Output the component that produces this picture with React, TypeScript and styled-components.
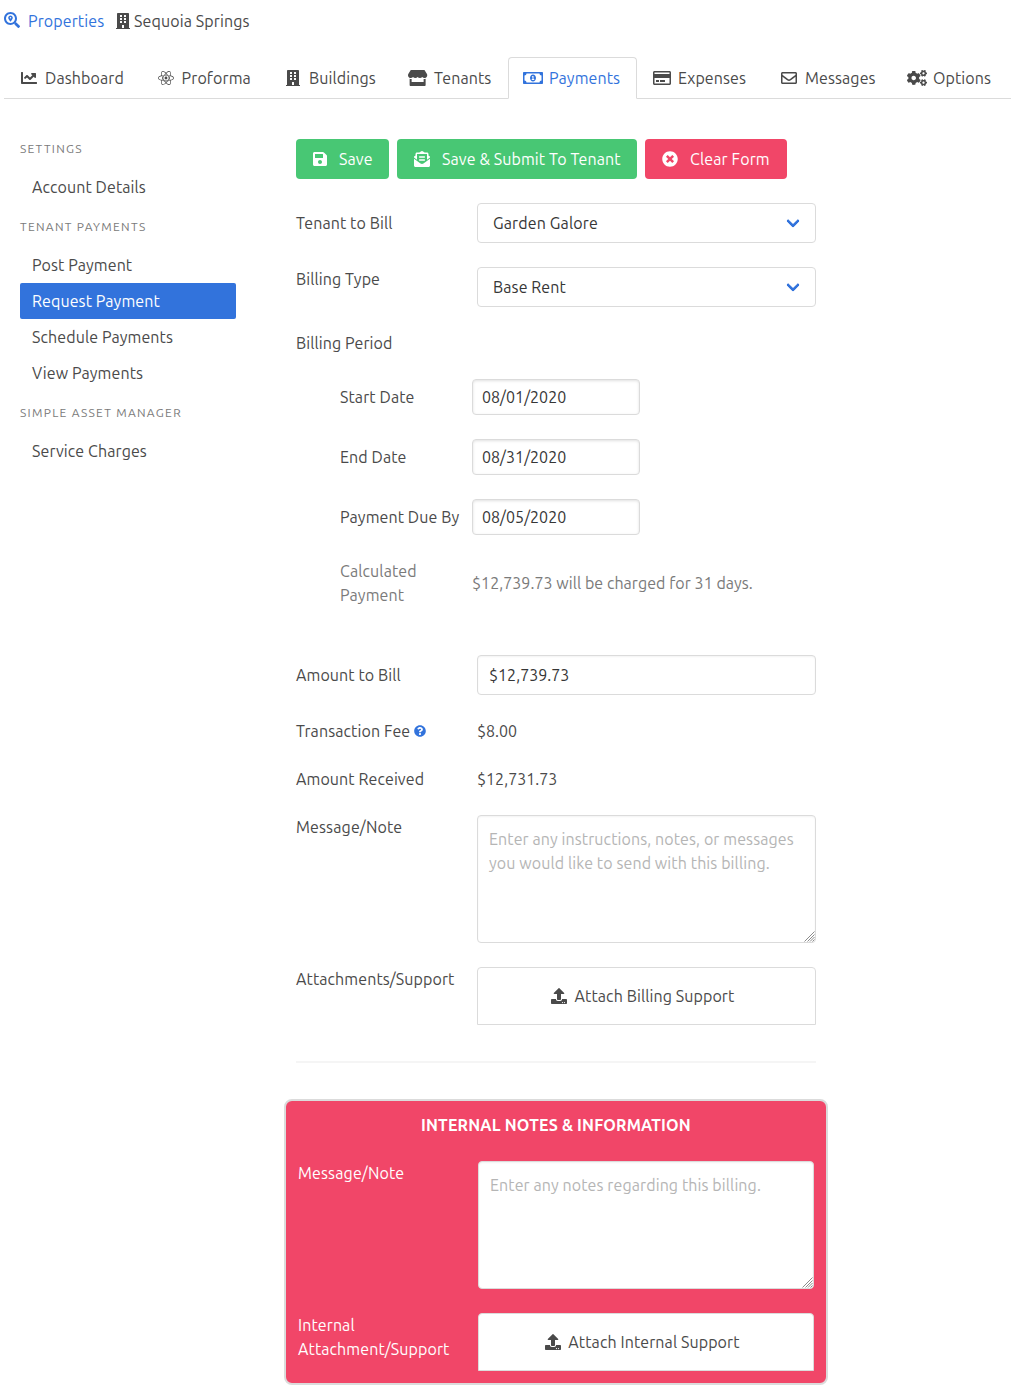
import React from "react";
import styled, { createGlobalStyle } from "styled-components";
import {
  FaSearchLocation, FaBuilding, FaChartLine, FaReact, FaStore, FaRegMoneyBillAlt,
  FaRegCreditCard, FaRegEnvelope, FaCogs, FaSave, FaEnvelopeOpenText, FaTimesCircle,
  FaQuestionCircle, FaUpload,
} from "react-icons/fa";

const GlobalStyle = createGlobalStyle`
  *, *::before, *::after { box-sizing: border-box; }
  body {
    margin: 0;
    background: #fff;
    color: #4a4a4a;
    font-family: Ubuntu, "Noto Sans", sans-serif;
    font-size: 16px;
    line-height: 24px;
    letter-spacing: 0.1px;
  }
  input, textarea, button { font: inherit; letter-spacing: inherit; margin: 0; }
  svg { display: block; flex: none; }
`;

const Text = styled.span<{ $ls?: number }>`
  white-space: nowrap;
  letter-spacing: ${(p) => (p.$ls === undefined ? "inherit" : `${p.$ls}px`)};
`;

const Icon = styled.span<{ $w?: number; $h?: number; $box?: number }>`
  display: flex;
  flex: none;
  justify-content: center;
  align-items: center;
  width: ${(p) => p.$box ?? p.$w ?? 16}px;
  svg {
    width: ${(p) => p.$w ?? 16}px;
    height: ${(p) => p.$h ?? 16}px;
  }
`;

const Page = styled.div`
  height: 1397px;
  overflow: hidden;
  padding: 9px 0 0 4px;
`;

const Breadcrumb = styled.nav`
  display: flex;
  height: 24px;
`;

const Crumb = styled.a<{ $link?: boolean; $gap: number; $w: number }>`
  display: flex;
  gap: ${(p) => p.$gap}px;
  width: ${(p) => p.$w}px;
  color: ${(p) => (p.$link ? "#3273dc" : "#4a4a4a")};
  ${Icon} { height: ${(p) => (p.$link ? 22 : 24)}px; }
`;

const TabBar = styled.nav`
  display: flex;
  height: 42px;
  margin-top: 24px;
  border-bottom: 1px solid #dbdbdb;
`;

const Tab = styled.a<{ $active?: boolean; $w: number }>`
  display: flex;
  align-items: center;
  flex: none;
  gap: 8px;
  width: ${(p) => p.$w}px;
  height: 42px;
  padding: 0 16px;
  border: 1px solid ${(p) => (p.$active ? "#dbdbdb" : "transparent")};
  border-bottom-color: ${(p) => (p.$active ? "#fff" : "#dbdbdb")};
  border-radius: 4px 4px 0 0;
  color: ${(p) => (p.$active ? "#3273dc" : "#4a4a4a")};
`;

const Columns = styled.div`
  display: flex;
  gap: 48px;
  padding: 40px 0 0 16px;
`;

const Sidebar = styled.aside`
  width: 216px;
  flex: none;
`;

const MenuLabel = styled.p`
  margin: 12px 0;
  padding-top: 2px;
  color: #7a7a7a;
  font-size: 12px;
  line-height: 16px;
  letter-spacing: 1.3px;
  text-transform: uppercase;
  &:first-child { margin-top: 0; }
`;

const MenuItem = styled.a<{ $active?: boolean }>`
  display: block;
  padding: 6px 12px;
  border-radius: 2px;
  background: ${(p) => (p.$active ? "#3273dc" : "transparent")};
  color: ${(p) => (p.$active ? "#fff" : "#4a4a4a")};
`;

const Form = styled.main`
  width: 544px;
  padding: 0 12px;
`;

const Buttons = styled.div`
  display: flex;
  gap: 8px;
  margin-bottom: 24px;
`;

const Button = styled.button<{ $color: string; $w: number }>`
  display: flex;
  align-items: center;
  gap: 12px;
  width: ${(p) => p.$w}px;
  height: 40px;
  padding: 0 0 0 17px;
  border: 0;
  border-radius: 4px;
  background: ${(p) => p.$color};
  color: #fff;
`;

const Row = styled.div<{ $center?: boolean; $gap?: number }>`
  display: grid;
  grid-template-columns: 181px 1fr;
  align-items: ${(p) => (p.$center ? "center" : "start")};
  margin-bottom: ${(p) => p.$gap ?? 24}px;
`;

const Label = styled.label`
  display: flex;
  align-items: center;
  gap: 4px;
  svg { color: #3273dc; }
`;

const Select = styled.div`
  display: flex;
  align-items: center;
  justify-content: space-between;
  height: 40px;
  padding: 0 17px 0 15px;
  border: 1px solid #dbdbdb;
  border-radius: 4px;
  color: #363636;
  &::after {
    content: "";
    width: 10px;
    height: 10px;
    margin-bottom: 4px;
    border: 3px solid #3273dc;
    border-top: 0;
    border-right: 0;
    border-radius: 2px;
    transform: rotate(-45deg);
  }
`;

const Period = styled.div`
  padding-left: 44px;
  margin-bottom: 48px;
`;

const PeriodRow = styled.div<{ $muted?: boolean }>`
  display: grid;
  grid-template-columns: 132px 1fr;
  align-items: center;
  margin-bottom: 24px;
  color: ${(p) => (p.$muted ? "#7a7a7a" : "#4a4a4a")};
`;

const Input = styled.input<{ $date?: boolean }>`
  display: block;
  width: ${(p) => (p.$date ? "168px" : "100%")};
  height: ${(p) => (p.$date ? 36 : 40)}px;
  padding: 0 ${(p) => (p.$date ? 9 : 11)}px;
  border: 1px solid #dbdbdb;
  border-radius: 4px;
  outline: 0;
  background: #fff;
  box-shadow: inset 0 ${(p) => (p.$date ? "1px 3px rgba(10,10,10,0.12)" : "1px 2px rgba(10,10,10,0.05)")};
  color: #363636;
  letter-spacing: 0.03px;
`;

const NoteField = styled.div`
  position: relative;
`;

const TextArea = styled.textarea`
  display: block;
  width: 100%;
  height: 128px;
  padding: 11px;
  border: 1px solid #dbdbdb;
  border-radius: 4px;
  outline: 0;
  background: #fff;
  box-shadow: inset 0 1px 2px rgba(10, 10, 10, 0.05);
  resize: none;
  &::placeholder { color: #b5b5b5; }
`;

const Grip = styled.svg`
  position: absolute;
  right: 1px;
  bottom: 1px;
  width: 11px;
  height: 11px;
  stroke: #7f7f7f;
  stroke-width: 0.9;
`;

const Attach = styled.button`
  display: flex;
  align-items: center;
  justify-content: center;
  gap: 7.5px;
  width: 100%;
  height: 58px;
  padding: 0 7.5px 0 0;
  border: 1px solid #dbdbdb;
  border-radius: 4px 4px 0 0;
  background: #fff;
  color: #4a4a4a;
`;

const Divider = styled.hr`
  height: 2px;
  margin: 36px 0;
  border: 0;
  background: #f5f5f5;
`;

const Internal = styled.section`
  margin: 0 -12px;
  padding: 12px;
  border: 2px solid #dbdbdb;
  border-radius: 8px;
  background: #f14668;
  color: #fff;
  ${Row} { grid-template-columns: 180px 1fr; }
`;

const InternalTitle = styled.h2`
  margin: 0 0 24px;
  font-size: inherit;
  font-weight: 700;
  letter-spacing: 0.17px;
  text-align: center;
`;

const tabs = [
  { icon: <FaChartLine />, label: "Dashboard", w: 136.6, iconWidth: 16 },
  { icon: <FaReact />, label: "Proforma", w: 127.4, iconWidth: 16 },
  { icon: <FaBuilding />, label: "Buildings", w: 125, iconWidth: 14 },
  { icon: <FaStore />, label: "Tenants", w: 115, iconWidth: 19.25 },
  { icon: <FaRegMoneyBillAlt />, label: "Payments", w: 129, iconWidth: 20, active: true },
  { icon: <FaRegCreditCard />, label: "Expenses", w: 127, iconWidth: 18 },
  { icon: <FaRegEnvelope />, label: "Messages", w: 128, iconWidth: 16 },
  { icon: <FaCogs />, label: "Options", w: 115, iconWidth: 20 },
];

const menu = [
  { title: "Settings", items: ["Account Details"] },
  { title: "Tenant Payments", items: ["Post Payment", "Request Payment", "Schedule Payments", "View Payments"] },
  { title: "Simple Asset Manager", items: ["Service Charges"] },
];

const dates = [
  ["Start Date", "08/01/2020"],
  ["End Date", "08/31/2020"],
  ["Payment Due By", "08/05/2020"],
];

function Note({ placeholder }: { placeholder: string }) {
  return (
    <NoteField>
      <TextArea placeholder={placeholder} />
      <Grip viewBox="0 0 11 11">
        <path d="M0.5 10.5 10.5 0.5M3.5 10.5 10.5 3.5M6 10.5 10.5 6M8.5 10.5 10.5 8.5" />
      </Grip>
    </NoteField>
  );
}

export default function App() {
  return (
    <>
      <GlobalStyle />
      <Page>
        <Breadcrumb>
          <Crumb $link $gap={8} $w={112}>
            <Icon><FaSearchLocation /></Icon>
            <Text>Properties</Text>
          </Crumb>
          <Crumb $gap={4} $w={140}>
            <Icon $w={14}><FaBuilding /></Icon>
            <Text $ls={0.12}>Sequoia Springs</Text>
          </Crumb>
        </Breadcrumb>
        <TabBar>
          {tabs.map((t) => (
            <Tab key={t.label} $w={t.w} $active={t.active}>
              <Icon $w={t.iconWidth} $box={16}>{t.icon}</Icon>
              <Text>{t.label}</Text>
            </Tab>
          ))}
        </TabBar>
        <Columns>
          <Sidebar>
            {menu.map((group) => (
              <React.Fragment key={group.title}>
                <MenuLabel>{group.title}</MenuLabel>
                {group.items.map((item) => (
                  <MenuItem key={item} $active={item === "Request Payment"}>{item}</MenuItem>
                ))}
              </React.Fragment>
            ))}
          </Sidebar>
          <Form>
            <Buttons>
              <Button $color="#48c774" $w={93}>
                <Icon $w={14}><FaSave /></Icon><Text>Save</Text>
              </Button>
              <Button $color="#48c774" $w={240}>
                <Icon><FaEnvelopeOpenText /></Icon><Text>Save &amp; Submit To Tenant</Text>
              </Button>
              <Button $color="#f14668" $w={142}>
                <Icon><FaTimesCircle /></Icon><Text $ls={0.14}>Clear Form</Text>
              </Button>
            </Buttons>
            <Row $center>
              <Label><Text>Tenant to Bill</Text></Label>
              <Select><Text $ls={0.14}>Garden Galore</Text></Select>
            </Row>
            <Row>
              <Label><Text>Billing Type</Text></Label>
              <Select>Base Rent</Select>
            </Row>
            <Row>
              <Label><Text>Billing Period</Text></Label>
            </Row>
            <Period>
              {dates.map(([label, value]) => (
                <PeriodRow key={label}>
                  <Label><Text>{label}</Text></Label>
                  <Input $date defaultValue={value} />
                </PeriodRow>
              ))}
              <PeriodRow $muted>
                <span>Calculated<br />Payment</span>
                <Text $ls={0.05}>$12,739.73 will be charged for 31 days.</Text>
              </PeriodRow>
            </Period>
            <Row $center>
              <Label><Text>Amount to Bill</Text></Label>
              <Input defaultValue="$12,739.73" />
            </Row>
            <Row>
              <Label>
                <Text>Transaction Fee</Text>
                <Icon $w={12} $h={12}><FaQuestionCircle /></Icon>
              </Label>
              <Text $ls={0}>$8.00</Text>
            </Row>
            <Row>
              <Label><Text>Amount Received</Text></Label>
              <Text $ls={0.03}>$12,731.73</Text>
            </Row>
            <Row>
              <Label><Text $ls={0.14}>Message/Note</Text></Label>
              <Note placeholder="Enter any instructions, notes, or messages you would like to send with this billing." />
            </Row>
            <Row $gap={0}>
              <Label><Text>Attachments/Support</Text></Label>
              <Attach><Icon><FaUpload /></Icon><Text>Attach Billing Support</Text></Attach>
            </Row>
            <Divider />
            <Internal>
              <InternalTitle>INTERNAL NOTES &amp; INFORMATION</InternalTitle>
              <Row>
                <Label><Text $ls={0.14}>Message/Note</Text></Label>
                <Note placeholder="Enter any notes regarding this billing." />
              </Row>
              <Row $gap={0}>
                <Label><Text>Internal<br />Attachment/Support</Text></Label>
                <Attach><Icon><FaUpload /></Icon><Text>Attach Internal Support</Text></Attach>
              </Row>
            </Internal>
          </Form>
        </Columns>
      </Page>
    </>
  );
}
